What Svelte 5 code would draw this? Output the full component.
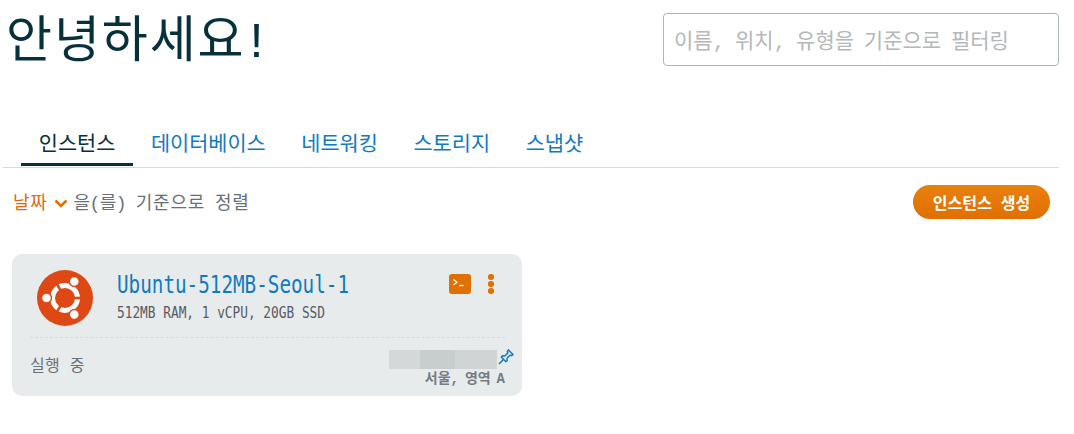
<script>
  const tabs = ['데이터베이스', '네트워킹', '스토리지', '스냅샷'];
</script>

<div class="page">
  <header class="top">
    <h1>안녕하세요<span class="bang">!</span></h1>
    <input class="search" placeholder="이름, 위치, 유형을 기준으로 필터링" />
  </header>

  <nav class="tabs">
    <a class="tab active" href="#a">인스턴스</a>
    {#each tabs as t}
      <a class="tab" href="#a">{t}</a>
    {/each}
  </nav>

  <div class="sortbar">
    <div class="sort">
      <span class="date">날짜</span>
      <svg class="chev" width="14" height="9" viewBox="0 0 14 9"><path d="M1.5 1.5 7 7l5.5-5.5" fill="none" stroke="#e07000" stroke-width="2.6"/></svg>
      <span class="label"><span class="tight">을(를)</span> 기준으로 정렬</span>
    </div>
    <button class="create">인스턴스 생성</button>
  </div>

  <section class="card">
    <div class="head">
      <svg class="logo" width="56" height="56" viewBox="0 0 56 56">
        <circle cx="28" cy="28" r="28" fill="#dd4814"/>
        <circle cx="28" cy="28" r="12.5" fill="none" stroke="#fff" stroke-width="5"/>
        <g stroke="#dd4814" stroke-width="2.6">
          <path d="M33 28 H44"/>
          <path d="M25.5 23.7 L19.5 13.3"/>
          <path d="M25.5 32.3 L19.5 42.7"/>
        </g>
        <g fill="#fff" stroke="#dd4814" stroke-width="1.4">
          <circle cx="9.5" cy="28" r="5"/>
          <circle cx="37.3" cy="11.5" r="5"/>
          <circle cx="37.3" cy="44.5" r="5"/>
        </g>
      </svg>
      <div class="title">
        <a class="name" href="#a"><span class="narrow">Ubuntu-512MB-Seoul-1</span></a>
        <div class="spec"><span class="narrow">512MB RAM, 1 vCPU, 20GB SSD</span></div>
      </div>
      <div class="actions">
        <span class="term"><svg width="22" height="20" viewBox="0 0 22 20"><path d="M4.5 5.5 8 8.2 4.5 11" fill="none" stroke="#fff" stroke-width="1.2"/><path d="M10 11.5h4.5" stroke="#fff" stroke-width="1.3"/></svg></span>
        <span class="dots"><i></i><i></i><i></i></span>
      </div>
    </div>
    <div class="foot">
      <span class="status">실행 중</span>
      <div class="where">
        <div class="ip">
          <div class="blur"><b class="b1"></b><b class="b2"></b><b class="b3"></b></div>
          <svg class="pin" width="16" height="17" viewBox="0 0 16 17"><path d="M10.5 1 15 5.6 13.8 6.4 12 6.2 9 9.2 9.2 11.6 7.8 12.6 3.4 8.2 4.4 6.8 6.8 7 9.8 4 9.4 2.2Z M5.4 10.4 1 15" fill="none" stroke="#0f7ac0" stroke-width="1.5"/></svg>
        </div>
        <div class="zone">서울, 영역 A</div>
      </div>
    </div>
  </section>
</div>

<style>
  :global(body) { margin: 0; background: #fff; }
  .page {
    width: 1074px; height: 434px; box-sizing: border-box; overflow: hidden;
    font-family: "Liberation Mono", "Noto Sans CJK KR", monospace;
    color: #545b64; padding: 13px 15px 0 3px;
  }
  .top { display: flex; justify-content: space-between; align-items: flex-start; height: 105px; }
  h1 { margin: 0 0 0 3px; padding-top: 4px; font-size: 50px; font-weight: 400; line-height: 53px; color: #06303a; letter-spacing: 1.9px; }
  .bang { margin-left: -4px; }
  .search {
    width: 396px; height: 53px; box-sizing: border-box; border: 1px solid #aab7b8; border-radius: 4px;
    padding: 6px 10px 0; font: 400 21px "Liberation Mono", "Noto Sans CJK KR", monospace; word-spacing: -2.8px; outline: none;
  }
  .search::placeholder { color: #b4b8b8; opacity: 1; }
  .tabs { display: flex; height: 49px; padding-left: 18px; border-bottom: 1px solid #d5dbdb; }
  .tab {
    font-size: 20.8px; line-height: 26px; color: #0f7ac0; text-decoration: none; padding: 15px 17.8px 0;
    box-sizing: border-box; height: 45px; white-space: nowrap;
  }
  .tab.active { color: #06303a; border-bottom: 3px solid #06303a; height: 48px; }
  .sortbar { display: flex; justify-content: space-between; align-items: center; padding: 17px 9px 0 10px; height: 34px; }
  .sort { display: flex; align-items: center; padding-top: 3px; font-size: 18px; letter-spacing: .7px; line-height: 24px; color: #687078; }
  .date { color: #dd6b10; }
  .chev { margin: 0 5px 0 6px; }
  .label { margin-left: 1px; word-spacing: -1.5px; }
  .tight { letter-spacing: -.6px; }
  .create {
    width: 137px; height: 34px; border: 0; border-radius: 17px; color: #fff; font: 700 16px "Liberation Mono", "Noto Sans CJK KR", monospace;
    background: linear-gradient(#e8800f, #e07000); padding: 0; word-spacing: -1px; letter-spacing: .1px;
  }
  .card {
    margin: 35px 0 0 9px; width: 510px; height: 142px; box-sizing: border-box; background: #e8ebec;
    border-radius: 10px; padding: 16px 17px 0 18px;
  }
  .head { display: flex; align-items: flex-start; height: 67px; border-bottom: 1px dashed #d5dbdb; }
  .logo { flex: none; margin: 0 0 0 7px; }
  .title { margin-left: 24px; flex: 1; font-family: "DejaVu Sans Mono", monospace; }
  .narrow { display: inline-block; transform-origin: left center; white-space: nowrap; }
  .name { display: block; font-size: 24.4px; line-height: 28px; margin-top: 1px; color: #0f7ac0; text-decoration: none; }
  .name .narrow { transform: scaleX(.79); }
  .spec { font-size: 15px; line-height: 16px; margin-top: 6px; color: #545b64; }
  .spec .narrow { transform: scaleX(.853); }
  .actions { display: flex; align-items: flex-start; gap: 17px; padding: 4px 11px 0 0; }
  .term { width: 22px; height: 20px; background: #e07000; border-radius: 3px; display: block; }
  .term svg { display: block; }
  .dots { display: flex; flex-direction: column; gap: 1.4px; }
  .dots i { width: 5.6px; height: 5.6px; border-radius: 50%; background: #e07000; display: block; }
  .foot { display: flex; justify-content: space-between; }
  .status { font-size: 16px; letter-spacing: .2px; line-height: 20px; margin-top: 19px; color: #687078; }
  .where { text-align: right; margin-top: 11px; }
  .ip { display: flex; justify-content: flex-end; align-items: flex-start; }
  .blur { display: flex; height: 19px; width: 108px; margin-top: 1px; margin-right: 1px; }
  .blur b { display: block; height: 100%; }
  .b1 { width: 31px; background: #d4d8d9; }
  .b2 { width: 35px; background: #c8cdcd; }
  .b3 { width: 42px; background: #d0d4d5; }
  .pin { margin: 0 -9px 0 0; }
  .zone { font-size: 14px; line-height: 17px; word-spacing: -2.5px; color: #747c84; font-weight: 700; margin-top: 2px; }
</style>
